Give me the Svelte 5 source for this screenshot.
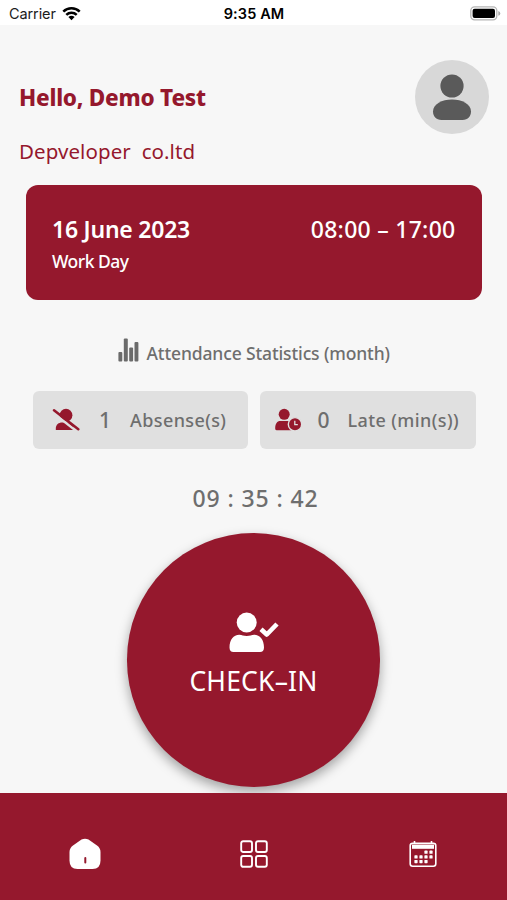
<script>
  let name = "Demo Test";
  let company = "Depveloper  co.ltd";
  let date = "16 June 2023";
  let shift = "08:00 – 17:00";
  let absences = 1;
  let late = 0;
  let clock = "09 : 35 : 42";

  // calendar day dots, [column, row]
  const days = [[2, 0], [3, 0], [0, 1], [1, 1], [2, 1], [3, 1], [0, 2], [1, 2], [2, 2]];
</script>

<div class="screen">
  <div class="status">
    <div class="carrier">
      <span>Carrier</span>
      <svg width="19" height="15" viewBox="0 0 19 15">
        <g fill="none" stroke="#000" stroke-width="2.5">
          <path d="M1.3 5.6a11.6 11.6 0 0 1 16.4 0" />
          <path d="M4.3 8.9a7.4 7.4 0 0 1 10.4 0" />
        </g>
        <path d="M6.4 11.1a4.5 4.5 0 0 1 6.2 0L9.5 14.3z" />
      </svg>
    </div>
    <span class="time">9:35 AM</span>
    <svg class="battery" width="31" height="15" viewBox="0 0 31 15">
      <rect x="0.8" y="0.8" width="26" height="13" rx="3.8" fill="#fff" stroke="#b5b5b5" stroke-width="1.3" />
      <rect x="2.6" y="2.7" width="22.4" height="9.2" rx="2" />
      <path d="M28.3 5v4.8q2-.7 2-2.4t-2-2.4z" fill="#aaa" />
    </svg>
  </div>

  <header>
    <div>
      <h1>Hello, {name}</h1>
      <p class="company">{company}</p>
    </div>
    <div class="avatar">
      <svg width="74" height="74" viewBox="0 0 74 74" fill="#5a5a5a">
        <circle cx="37" cy="26" r="11.6" />
        <path d="M26.5 60C21 60 18 56 18 51.5C18 44 27 39.5 37 39.5S56 44 56 51.5C56 56 53 60 47.5 60z" />
      </svg>
    </div>
  </header>

  <section class="card">
    <div class="row">
      <span class="date">{date}</span>
      <span class="shift">{shift}</span>
    </div>
    <p>Work Day</p>
  </section>

  <div class="heading">
    <svg width="21" height="24" viewBox="0 0 21 24" fill="#6b6b6b">
      <rect x="0.4" y="14" width="3.9" height="9.5" rx="1" />
      <rect x="5.8" y="0.5" width="4" height="23" rx="1" />
      <rect x="11.2" y="9.5" width="3.9" height="14" rx="1" />
      <rect x="16.5" y="4" width="3.9" height="19.5" rx="1" />
    </svg>
    <span>Attendance Statistics (month)</span>
  </div>

  <div class="stats">
    <div class="stat">
      <svg width="28" height="24" viewBox="0 0 28 24">
        <circle cx="14" cy="7.2" r="6.4" fill="#95182d" />
        <path d="M3.8 22v-1.5c0-4 3-6 6.2-6h8c2.5 0 3.5 3 3.5 7.5z" fill="#95182d" />
        <path d="M1 4.7L24.5 23.2" stroke="#e0e0e0" stroke-width="2.4" />
        <path d="M2 2.2L26.3 21.2" stroke="#95182d" stroke-width="2.5" stroke-linecap="round" />
      </svg>
      <span class="value absent-value">{absences}</span>
      <span class="label">Absense(s)</span>
    </div>
    <div class="stat late">
      <svg width="28" height="24" viewBox="0 0 28 24">
        <g fill="#95182d">
          <circle cx="10.2" cy="6.3" r="5.5" />
          <path d="M1.2 20.5c0-5 2-7.5 5-7.5h8.5c2 0 3 2 3 4.5v4.7H2.6c-.9 0-1.4-.6-1.4-1.7z" />
          <circle cx="21" cy="16.3" r="6.7" stroke="#e0e0e0" stroke-width="1.4" />
        </g>
        <path d="M20.8 12.8v3.8h3" fill="none" stroke="#e0e0e0" stroke-width="1.3" />
      </svg>
      <span class="value late-value">{late}</span>
      <span class="label">Late (min(s))</span>
    </div>
  </div>

  <div class="clock">{clock}</div>

  <button class="checkin">
    <svg width="50" height="41" viewBox="0 0 50 41" fill="#fff">
      <circle cx="17.7" cy="10.5" r="10" />
      <path d="M0.5 35.5C0.5 27.5 4.5 22.7 10.3 22.7C13 22.7 14.5 24 17.7 24S22.5 22.7 25.2 22.7C31 22.7 35 27.5 35 35.5C35 38.5 33.5 40 31 40H4.5C2 40 0.5 38.5 0.5 35.5z" />
      <path d="M32 17.2L37.8 22.5L48 12" fill="none" stroke="#fff" stroke-width="4.6" stroke-linejoin="round" />
    </svg>
    <span>CHECK–IN</span>
  </button>

  <nav>
    <button aria-label="Home">
      <svg width="32" height="32" viewBox="0 0 32 32">
        <path d="M12.5 1.5Q16 -.2 19.5 1.5L28 7.5Q31.5 10 31.5 14V22.5Q31.5 31 23.5 31H8.5Q.5 31 .5 22.5V14Q.5 10 4 7.5z" fill="#fff" />
        <path d="M16.3 20v4.5" stroke="#95182d" stroke-width="2" stroke-linecap="round" />
      </svg>
    </button>
    <button aria-label="Menu">
      <svg width="28" height="28" viewBox="0 0 28 28" fill="none" stroke="#fff" stroke-width="1.9">
        <rect x="1.2" y="1.2" width="10.8" height="10.8" rx="2" />
        <rect x="16" y="1.2" width="10.8" height="10.8" rx="2" />
        <rect x="1.2" y="16" width="10.8" height="10.8" rx="2" />
        <rect x="16" y="16" width="10.8" height="10.8" rx="2" />
      </svg>
    </button>
    <button aria-label="Calendar">
      <svg width="28" height="28" viewBox="0 0 28 28">
        <rect x="1.2" y="3.2" width="25.6" height="23" rx="2.5" fill="none" stroke="#fff" stroke-width="1.6" />
        <path d="M3 4.5h22v4.3H3z" fill="#fff" />
        <path d="M5.5 1v3M22.5 1v3" stroke="#fff" stroke-width="1.6" />
        {#each days as [col, row]}
          <rect x={5.4 + col * 5} y={10.6 + row * 4.7} width="3.2" height="3.2" rx="0.6" fill="#fff" />
        {/each}
      </svg>
    </button>
  </nav>
</div>

<style>
  :global(body) {
    margin: 0;
  }

  .screen {
    width: 507px;
    height: 900px;
    display: flex;
    flex-direction: column;
    background: #f7f7f7;
    color: #6e6e6e;
    font-family: "Noto Sans", sans-serif;
    font-weight: 500;
    overflow: hidden;
  }

  svg {
    display: block;
    flex: none;
  }

  h1,
  p {
    margin: 0;
  }

  button {
    all: unset;
    cursor: pointer;
  }

  .status {
    height: 25px;
    box-sizing: border-box;
    padding: 1px 6px 0 9px;
    display: grid;
    grid-template-columns: 1fr auto 1fr;
    align-items: center;
    background: #fff;
    color: #1c1c1c;
    font-family: Inter, sans-serif;
    font-size: 14.5px;
    font-weight: 400;
  }

  .carrier {
    display: flex;
    align-items: center;
    gap: 6px;
    letter-spacing: -0.1px;
  }

  .time {
    font-weight: 600;
    color: #000;
    letter-spacing: 0.1px;
    margin-right: 2px;
  }

  .battery {
    justify-self: end;
  }

  header {
    height: 160px;
    box-sizing: border-box;
    padding: 35px 18px 0 19px;
    display: flex;
    justify-content: space-between;
    color: #95182d;
  }

  h1 {
    margin-top: 23px;
    font-size: 22.5px;
    line-height: 30px;
    font-weight: 800;
    letter-spacing: -0.23px;
  }

  .company {
    margin-top: 23px;
    font-size: 20.5px;
    line-height: 30px;
    font-weight: 400;
    letter-spacing: 0.08px;
    white-space: pre;
  }

  .avatar {
    width: 74px;
    height: 74px;
    border-radius: 50%;
    background: #d8d8d8;
  }

  .card {
    height: 115px;
    box-sizing: border-box;
    margin: 0 25.5px 0 26px;
    padding: 29px 26px 0;
    border-radius: 12px;
    background: #95182d;
    color: #fff;
  }

  .row {
    display: flex;
    justify-content: space-between;
    font-size: 23px;
    line-height: 30px;
  }

  .date {
    font-weight: 600;
    letter-spacing: -0.23px;
  }

  .shift {
    letter-spacing: 0.27px;
  }

  .card p {
    margin-top: 2px;
    font-size: 17.5px;
    line-height: 30px;
    letter-spacing: -0.5px;
  }

  .heading {
    margin: 38px 0 0 118px;
    height: 30px;
    display: flex;
    gap: 7.5px;
    font-size: 17.5px;
    line-height: 30px;
    letter-spacing: -0.13px;
  }

  .stats {
    margin: 23px 31.5px 0 32.5px;
    display: grid;
    grid-template-columns: 1fr 1fr;
    gap: 12px;
  }

  .stat {
    height: 57.5px;
    box-sizing: border-box;
    padding-left: 19.5px;
    display: flex;
    align-items: center;
    border-radius: 6px;
    background: #e0e0e0;
  }

  .late {
    padding-left: 14px;
  }

  .value {
    font-size: 21px;
  }

  .absent-value {
    width: 31px;
    margin-left: 19px;
  }

  .late-value {
    width: 30px;
    margin-left: 15.5px;
  }

  .label {
    font-size: 18px;
    letter-spacing: 0.4px;
  }

  .clock {
    margin-top: 34.5px;
    padding-left: 4px;
    text-align: center;
    font-size: 23px;
    line-height: 30px;
    letter-spacing: 0.9px;
  }

  .checkin {
    width: 253.5px;
    height: 253.5px;
    margin: 20px auto 0;
    border-radius: 50%;
    background: #95182d;
    color: #fff;
    box-shadow: 0 5px 12px rgba(0, 0, 0, 0.35);
    display: flex;
    flex-direction: column;
    align-items: center;
    font-size: 26.5px;
    font-weight: 400;
    letter-spacing: 0.2px;
  }

  .checkin svg {
    margin-top: 79px;
  }

  .checkin span {
    margin-top: 8px;
    line-height: 40px;
  }

  nav {
    margin-top: auto;
    height: 107px;
    box-sizing: border-box;
    padding-top: 14px;
    display: grid;
    grid-template-columns: repeat(3, 1fr);
    align-items: center;
    justify-items: center;
    background: #95182d;
    z-index: 1;
  }
</style>
